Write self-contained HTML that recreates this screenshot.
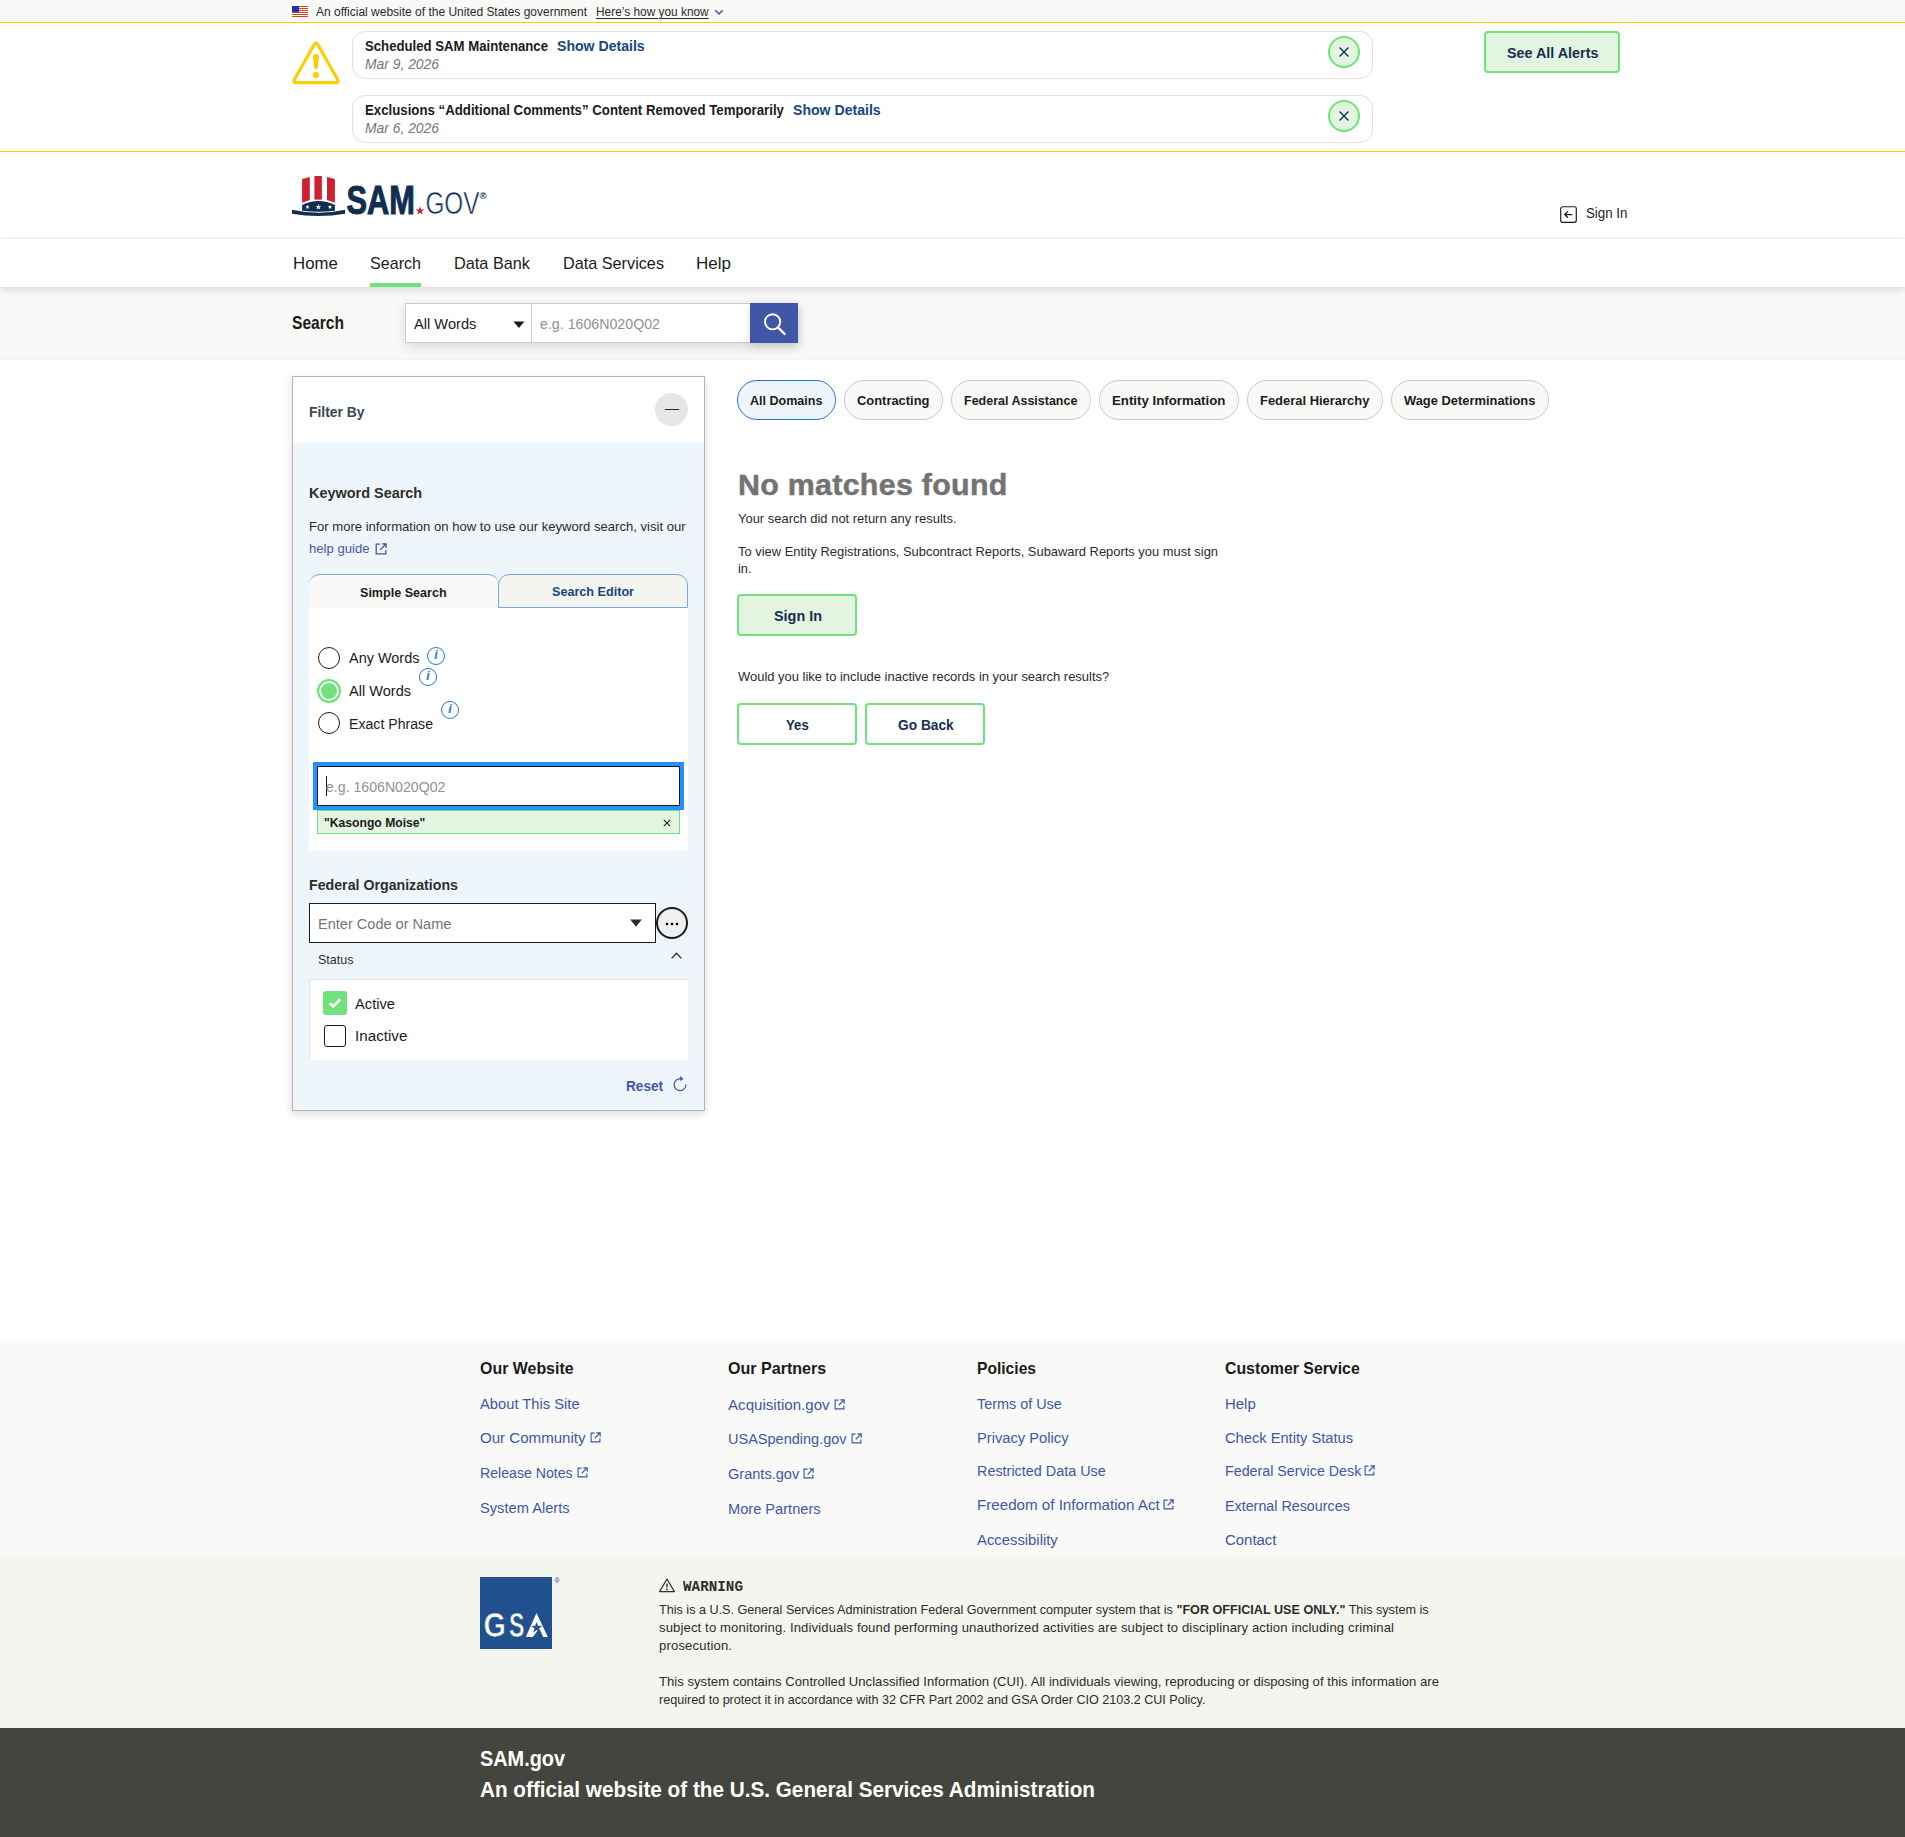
<!DOCTYPE html>
<html lang="en">
<head>
<meta charset="utf-8">
<title>SAM.gov | Search</title>
<style>*{box-sizing:border-box;margin:0;padding:0}
html,body{width:1905px;height:1837px;background:#fff;overflow:hidden}
body{font-family:"Liberation Sans",sans-serif;color:#1b1b1b;position:relative;-webkit-font-smoothing:antialiased}
a{color:inherit;text-decoration:none}
ul{list-style:none}
.abs,.t,svg.i{position:absolute}
.t{white-space:nowrap;line-height:1;display:block;transform-origin:0 50%}
.b{font-weight:700}
.it{font-style:italic}
.gray{color:#71767a}
.link{color:#3f57a6}
.navy{color:#1a4480}
.ink{color:#162e51}
.body{color:#2b2b2b}
.ph{color:#8d9297}
.mono{font-family:"Liberation Mono",monospace}
.u{text-decoration:underline;text-underline-offset:2px}
/* regions */
#govbanner{left:0;top:0;width:1905px;height:21px;background:#f9f9f7}
#alerts{left:0;top:22px;width:1905px;height:130px;background:#fff;border-top:1px solid #face00;border-bottom:1px solid #face00}
.alertbox{left:352px;width:1021px;height:48px;border:1px solid #dfe1e2;border-radius:13px;background:#fff}
.closebtn{width:32px;height:32px;border-radius:50%;border:2px solid #70e17b;background:#e3f5e1}
.btn{border:2px solid #70e17b;border-radius:4px;background:#fff}
.btn.fill{background:#e3f5e1}
#header{left:0;top:152px;width:1905px;height:87px;background:#fff;border-bottom:1px solid #f3f3ef}
#nav{left:0;top:239px;width:1905px;height:48px;background:#fff;box-shadow:0 3px 8px rgba(0,0,0,.13);z-index:3}
#navcur{left:370px;top:44px;width:51px;height:4px;background:#70e17b}
#searchband{left:0;top:287px;width:1905px;height:73px;background:#f9f9f7;border-bottom:1px solid #f3f3ef}
#sgroup{left:405px;top:303px;width:393px;height:40px;box-shadow:0 4px 11px rgba(0,0,0,.13);background:#fff}
#ssel{left:0;top:0;width:127px;height:40px;border:1px solid #c9cccf;background:#fff}
#sinp{left:126px;top:0;width:220px;height:40px;border:1px solid #c9cccf;background:#fff}
#sbtn{left:345px;top:0;width:48px;height:40px;background:#3f57a6;box-shadow:0 3px 9px rgba(0,0,0,.13)}
#panel{left:292px;top:376px;width:413px;height:735px;border:1px solid #b4b5b7;background:#eff6fb;box-shadow:0 3px 9px rgba(0,0,0,.14)}
#phead{left:0;top:0;width:411px;height:65px;background:#fff}
#pcirc{left:655px;top:393px;width:33px;height:33px;border-radius:50%;background:#e6e6e6}
#tab1{left:309px;top:574px;width:190px;height:34px;background:#f9f9f7;border-top:1px solid #7aa9ef;border-radius:11px 11px 0 0}
#tab2{left:498px;top:574px;width:190px;height:34px;background:#f5f5f0;border:1px solid #79a6ee;border-radius:11px 11px 0 0}
#kwbox{left:309px;top:608px;width:379px;height:242px;background:#fff}
.radio{width:22px;height:22px;border-radius:50%;border:1.5px solid #1b1b1b;background:#fff}
.radio.on{width:24px;height:24px;border:2px solid #70e17b;background:#70e17b;box-shadow:inset 0 0 0 2px #fff}
.info{width:18px;height:18px;border-radius:50%;border:1.5px solid #2672de;color:#2672de;font:italic 700 12.5px/15px "Liberation Sans",sans-serif;text-align:center}
#kwinput{left:317px;top:766px;width:363px;height:40px;border:1px solid #1b1b1b;background:#fff;outline:4px solid #2491ff}
#kwcaret{left:326px;top:776px;width:1px;height:20px;background:#1b1b1b}
#kwtag{left:317px;top:810px;width:363px;height:24px;border:1px solid #70e17b;background:#e3f5e1}
#foinput{left:309px;top:903px;width:347px;height:40px;border:1px solid #1b1b1b;background:#fff}
#fomore{left:656px;top:907px;width:32px;height:32px;border-radius:50%;border:2px solid #1b1b1b;background:#f0f0f0}
#stbox{left:309px;top:979px;width:379px;height:81px;background:#fff;border-top:1px solid #dfe1e2;border-left:1px solid #e6e6e6}
#cb1{left:323px;top:991px;width:24px;height:24px;border-radius:3px;background:#70e17b}
#cb2{left:324px;top:1025px;width:22px;height:22px;border-radius:3px;border:1.5px solid #1b1b1b;background:#fff}
.pill{top:380px;height:40px;border:1px solid #c6cace;border-radius:20px;background:#f9f9f7}
.pill.on{border-color:#2672de;background:#eff6fb}
#foot1{left:0;top:1343px;width:1905px;height:214px;background:#f9f9f7}
#foot2{left:0;top:1557px;width:1905px;height:171px;background:#f5f5f0}
#foot3{left:0;top:1728px;width:1905px;height:109px;background:#454540}
#gsa{left:480px;top:1577px;width:72px;height:72px;background:#21508f}
</style>
</head>
<body>

<div id="govbanner" class="abs"></div>
<svg class="i" style="left:292px;top:6px" width="16" height="11" viewBox="0 0 16 11">
<rect width="16" height="11" fill="#fff"/>
<g fill="#db3e1f"><rect y="0" width="16" height="1"/><rect y="2" width="16" height="1"/><rect y="4" width="16" height="1"/><rect y="6" width="16" height="1"/><rect y="8" width="16" height="1"/><rect y="10" width="16" height="1"/></g>
<rect width="7" height="6" fill="#1e33b1"/></svg>
<span id="t1" class="t body" style="left:316.0px;top:6.0px;font-size:12.3px;transform:scaleX(0.9749);">An official website of the United States government</span>
<a id="t2" class="t body u" style="left:596.0px;top:6.0px;font-size:12.3px;transform:scaleX(0.9661);">Here’s how you know</a>
<svg class="i" style="left:714px;top:8px" width="10" height="8" viewBox="0 0 10 8"><path d="M1.2 2.2 5 6 8.8 2.2" fill="none" stroke="#3f57a6" stroke-width="1.5"/></svg>
<div id="alerts" class="abs"></div>
<svg class="i" style="left:291px;top:41px" width="50" height="44" viewBox="0 0 50 44">
<path d="M23.03 3.69Q25 .2 26.97 3.69L46.43 38.21Q48.4 41.7 44.4 41.7H5.6Q1.6 41.7 3.57 38.21Z" fill="none" stroke="#face00" stroke-width="3.2"/>
<path d="M22 15.6Q22 12.9 25 12.9 28 12.9 28 15.6L26.8 26.6Q26.6 28.2 25 28.2 23.4 28.2 23.2 26.6Z" fill="#face00"/>
<circle cx="25" cy="34.1" r="3.1" fill="#face00"/></svg>
<div class="abs alertbox" style="top:31px"></div>
<span id="t3" class="t b" style="left:365.0px;top:39.0px;font-size:14.2px;transform:scaleX(0.9285);">Scheduled SAM Maintenance</span>
<a id="t4" class="t b navy" style="left:556.6px;top:39.0px;font-size:14.2px;transform:scaleX(0.9931);">Show Details</a>
<span id="t5" class="t it gray" style="left:365.0px;top:56.3px;font-size:15px;transform:scaleX(0.9245);">Mar 9, 2026</span>
<div class="abs closebtn" style="left:1328px;top:36px"></div>
<svg class="i" style="left:1338px;top:46px" width="12" height="12" viewBox="0 0 12 12"><path d="M1.5 1.5 10.5 10.5M10.5 1.5 1.5 10.5" stroke="#162e51" stroke-width="1.4"/></svg>
<div class="abs alertbox" style="top:95px"></div>
<span id="t6" class="t b" style="left:365.0px;top:103.0px;font-size:14.2px;transform:scaleX(0.9330);">Exclusions “Additional Comments” Content Removed Temporarily</span>
<a id="t7" class="t b navy" style="left:792.8px;top:103.0px;font-size:14.2px;transform:scaleX(0.9931);">Show Details</a>
<span id="t8" class="t it gray" style="left:365.0px;top:120.3px;font-size:15px;transform:scaleX(0.9245);">Mar 6, 2026</span>
<div class="abs closebtn" style="left:1328px;top:100px"></div>
<svg class="i" style="left:1338px;top:110px" width="12" height="12" viewBox="0 0 12 12"><path d="M1.5 1.5 10.5 10.5M10.5 1.5 1.5 10.5" stroke="#162e51" stroke-width="1.4"/></svg>
<a class="abs btn fill" style="left:1484px;top:31px;width:136px;height:42px"></a>
<span id="t9" class="t b ink" style="left:1506.6px;top:45.1px;font-size:15.2px;transform:scaleX(0.9442);">See All Alerts</span>
<div id="header" class="abs"></div>
<svg class="i" style="left:290px;top:174px" width="200" height="44" viewBox="0 0 200 44">
<g fill="#cf2030">
<path d="M12.1 5.1 19.8 2.9V25.9L12.1 28.75Z"/><path d="M24.4 2H31.9V25.6H24.4Z"/><path d="M37 2.9 44.9 5.1V28.75L37 25.9Z"/></g>
<path d="M12.1 30.9Q28.5 23.3 44.9 30.9V36.8Q28.5 38.5 12.1 36.8Z" fill="#112e51"/>
<path d="M1.9 35.8Q28.5 41.8 55.1 35.8V39.8Q28.5 44.2 1.9 39.8Z" fill="#112e51"/>
<g fill="#fff"><path d="M17.50 30.80 18.04 32.36 19.69 32.39 18.37 33.38 18.85 34.96 17.50 34.02 16.15 34.96 16.63 33.38 15.31 32.39 16.96 32.36Z"/><path d="M28.40 30.00 29.11 32.03 31.25 32.07 29.54 33.37 30.16 35.43 28.40 34.20 26.64 35.43 27.26 33.37 25.55 32.07 27.69 32.03Z"/><path d="M40.00 30.80 40.54 32.36 42.19 32.39 40.87 33.38 41.35 34.96 40.00 34.02 38.65 34.96 39.13 33.38 37.81 32.39 39.46 32.36Z"/></g>
<text x="0" y="0" transform="translate(56.6 39.6) scale(.765 1)" font-family="Liberation Sans,sans-serif" font-weight="700" font-size="40.2" fill="#112e51" stroke="#112e51" stroke-width="1.1">SAM</text>
<path d="M130.00 32.40 131.08 35.51 134.37 35.58 131.75 37.57 132.70 40.72 130.00 38.84 127.30 40.72 128.25 37.57 125.63 35.58 128.92 35.51Z" fill="#cf2030"/>
<text x="0" y="0" transform="translate(135.4 39.6) scale(.775 1)" font-family="Liberation Sans,sans-serif" font-size="31.4" fill="#112e51" stroke="#fff" stroke-width=".55">GOV</text>
<text x="189.6" y="25" font-family="Liberation Sans,sans-serif" font-weight="700" font-size="9.5" fill="#112e51">®</text>
</svg>
<svg class="i" style="left:1559px;top:205px" width="19" height="19" viewBox="0 0 19 19">
<rect x="1.7" y="1.7" width="15.6" height="15.6" rx="2" fill="none" stroke="#1b1b1b" stroke-width="1.15"/>
<path d="M13.2 9.6H6M9 6.4 5.8 9.6 9 12.8" fill="none" stroke="#1b1b1b" stroke-width="1.3"/></svg>
<a id="t10" class="t" style="left:1586.0px;top:204.9px;font-size:15px;transform:scaleX(0.8843);">Sign In</a>
<nav id="nav" class="abs"><div id="navcur" class="abs"></div></nav>
<a id="t11" class="t" style="left:292.6px;top:254.6px;font-size:17px;transform:scaleX(0.9877);z-index:4;">Home</a>
<a id="t12" class="t" style="left:370.0px;top:254.6px;font-size:17px;transform:scaleX(0.9466);z-index:4;">Search</a>
<a id="t13" class="t" style="left:454.0px;top:254.6px;font-size:17px;transform:scaleX(0.9573);z-index:4;">Data Bank</a>
<a id="t14" class="t" style="left:563.0px;top:254.6px;font-size:17px;transform:scaleX(0.9544);z-index:4;">Data Services</a>
<a id="t15" class="t" style="left:696.0px;top:254.6px;font-size:17px;letter-spacing:0.010px;z-index:4;">Help</a>
<div id="searchband" class="abs"></div>
<span id="t16" class="t b" style="left:292.0px;top:313.2px;font-size:19px;transform:scaleX(0.8205);">Search</span>
<div id="sgroup" class="abs"><div id="ssel" class="abs"></div><div id="sinp" class="abs"></div><div id="sbtn" class="abs">
<svg class="i" style="left:12px;top:8px" width="26" height="26" viewBox="0 0 26 26"><circle cx="10.6" cy="10.8" r="7.6" fill="none" stroke="#fff" stroke-width="1.9"/><path d="M16.2 16.6 22.6 23" stroke="#fff" stroke-width="2.3" stroke-linecap="round"/></svg></div></div>
<span id="t17" class="t" style="left:414.3px;top:316.4px;font-size:15.2px;transform:scaleX(0.9644);">All Words</span>
<svg class="i" style="left:513px;top:321px" width="12" height="8" viewBox="0 0 12 8"><path d="M0.4 0.6H11.4L5.9 7Z" fill="#1b1b1b"/></svg>
<span id="t18" class="t ph" style="left:540.0px;top:316.4px;font-size:15.2px;transform:scaleX(0.9349);">e.g. 1606N020Q02</span>
<aside id="panel" class="abs"><div id="phead" class="abs"></div></aside>
<span id="t19" class="t b" style="left:309.4px;top:403.5px;font-size:15.2px;transform:scaleX(0.9150);color:#3d4551;">Filter By</span>
<div id="pcirc" class="abs"></div>
<div class="abs" style="left:665px;top:408.5px;width:14px;height:1.5px;background:#162e51"></div>
<span id="t20" class="t b" style="left:309.4px;top:485.1px;font-size:15.2px;transform:scaleX(0.9510);color:#2e2e2a;">Keyword Search</span>
<span id="t21" class="t body" style="left:309.4px;top:519.7px;font-size:13.3px;transform:scaleX(0.9837);">For more information on how to use our keyword search, visit our</span>
<a id="t22" class="t link" style="left:309.4px;top:541.7px;font-size:13.3px;transform:scaleX(0.9874);">help guide</a>
<svg class="i" style="left:375px;top:542.6px" width="12" height="12" viewBox="0 0 12 12"><path d="M5 1.2H1.2V10.8H10.8V7" fill="none" stroke="#3f57a6" stroke-width="1.25"/><path d="M6.9 0.9H11.1V5.1M11 1 5.2 6.8" fill="none" stroke="#3f57a6" stroke-width="1.25"/></svg>
<div id="tab1" class="abs"></div><div id="tab2" class="abs"></div>
<span id="t23" class="t b" style="left:360.0px;top:585.7px;font-size:13.3px;transform:scaleX(0.9448);">Simple Search</span>
<span id="t24" class="t b navy" style="left:552.0px;top:584.7px;font-size:13.3px;transform:scaleX(0.9483);">Search Editor</span>
<div id="kwbox" class="abs"></div>
<div class="abs radio" style="left:318px;top:647px"></div>
<span id="t25" class="t" style="left:349.0px;top:649.7px;font-size:15.2px;transform:scaleX(0.9514);">Any Words</span>
<div class="abs info" style="left:427px;top:647px">i</div>
<div class="abs radio on" style="left:317px;top:679px"></div>
<span id="t26" class="t" style="left:349.0px;top:683.1px;font-size:15.2px;transform:scaleX(0.9582);">All Words</span>
<div class="abs info" style="left:419px;top:668px">i</div>
<div class="abs radio" style="left:318px;top:712px"></div>
<span id="t27" class="t" style="left:349.0px;top:716.1px;font-size:15.2px;transform:scaleX(0.9299);">Exact Phrase</span>
<div class="abs info" style="left:441px;top:701px">i</div>
<div id="kwinput" class="abs"></div><div id="kwcaret" class="abs"></div>
<span id="t28" class="t ph" style="left:326.0px;top:779.1px;font-size:15.2px;transform:scaleX(0.9302);">e.g. 1606N020Q02</span>
<div id="kwtag" class="abs"></div>
<span id="t29" class="t b" style="left:323.6px;top:815.7px;font-size:13.3px;transform:scaleX(0.9145);">"Kasongo Moise"</span>
<svg class="i" style="left:662px;top:818px" width="10" height="10" viewBox="0 0 10 10"><path d="M1.8 1.8 8.2 8.2M8.2 1.8 1.8 8.2" stroke="#1b1b1b" stroke-width="1.1"/></svg>
<span id="t30" class="t b" style="left:309.3px;top:876.8px;font-size:15.2px;transform:scaleX(0.9341);color:#2e2e2a;">Federal Organizations</span>
<div id="foinput" class="abs"></div>
<span id="t31" class="t gray" style="left:318.3px;top:916.1px;font-size:15.2px;transform:scaleX(0.9577);">Enter Code or Name</span>
<svg class="i" style="left:630px;top:919px" width="12" height="8" viewBox="0 0 12 8"><path d="M0.2 0.4H11.8L6 7.8Z" fill="#2e2e2a"/></svg>
<div id="fomore" class="abs"></div>
<svg class="i" style="left:665px;top:921px" width="14" height="6" viewBox="0 0 14 6"><circle cx="2" cy="3" r="1.3"/><circle cx="7" cy="3" r="1.3"/><circle cx="12" cy="3" r="1.3"/></svg>
<span id="t32" class="t" style="left:317.6px;top:952.7px;font-size:13.3px;transform:scaleX(0.9389);color:#2e2e2a;">Status</span>
<svg class="i" style="left:670px;top:951px" width="13" height="9" viewBox="0 0 13 9"><path d="M1.6 7.4 6.5 2.2 11.4 7.4" fill="none" stroke="#2e2e2a" stroke-width="1.3"/></svg>
<div id="stbox" class="abs"></div>
<div id="cb1" class="abs"><svg class="i" style="left:5px;top:6px" width="14" height="12" viewBox="0 0 14 12"><path d="M1.8 6.2 5.2 9.4 12.2 2.4" fill="none" stroke="#fff" stroke-width="2.6"/></svg></div>
<span id="t33" class="t" style="left:355.0px;top:995.7px;font-size:15.2px;transform:scaleX(0.9671);">Active</span>
<div id="cb2" class="abs"></div>
<span id="t34" class="t" style="left:355.0px;top:1028.0px;font-size:15.2px;letter-spacing:0.008px;">Inactive</span>
<a id="t35" class="t b link" style="left:625.5px;top:1078.1px;font-size:15.2px;transform:scaleX(0.8967);">Reset</a>
<svg class="i" style="left:672px;top:1075px" width="16" height="17" viewBox="0 0 16 17">
<path d="M8.9 3.9A5.9 5.9 0 1 0 13.9 9.6" fill="none" stroke="#3f57a6" stroke-width="1.2"/>
<path d="M8.2 1 11.4 3.8 8.2 6.2Z" fill="#3f57a6"/></svg>
<div class="abs pill on" style="left:737px;width:99px"></div>
<span id="t36" class="t b" style="left:750.2px;top:393.7px;font-size:13.4px;transform:scaleX(0.9355);">All Domains</span>
<div class="abs pill" style="left:844px;width:99px"></div>
<span id="t37" class="t b" style="left:857.2px;top:393.7px;font-size:13.4px;transform:scaleX(0.9635);">Contracting</span>
<div class="abs pill" style="left:951px;width:140px"></div>
<span id="t38" class="t b" style="left:964.2px;top:393.7px;font-size:13.4px;transform:scaleX(0.9327);">Federal Assistance</span>
<div class="abs pill" style="left:1099px;width:140px"></div>
<span id="t39" class="t b" style="left:1112.2px;top:393.7px;font-size:13.4px;transform:scaleX(0.9899);">Entity Information</span>
<div class="abs pill" style="left:1247px;width:136px"></div>
<span id="t40" class="t b" style="left:1260.2px;top:393.7px;font-size:13.4px;transform:scaleX(0.9669);">Federal Hierarchy</span>
<div class="abs pill" style="left:1391px;width:158px"></div>
<span id="t41" class="t b" style="left:1404.2px;top:393.7px;font-size:13.4px;transform:scaleX(0.9632);">Wage Determinations</span>
<h1 id="t42" class="t b" style="left:738.0px;top:469.1px;font-size:30.4px;letter-spacing:0.280px;color:#737373;-webkit-text-stroke:.5px #737373;">No matches found</h1>
<p id="t43" class="t body" style="left:737.5px;top:512.2px;font-size:13.1px;transform:scaleX(0.9897);">Your search did not return any results.</p>
<p id="t44" class="t body" style="left:737.5px;top:544.9px;font-size:13.1px;transform:scaleX(0.9859);">To view Entity Registrations, Subcontract Reports, Subaward Reports you must sign</p>
<p id="t45" class="t body" style="left:737.5px;top:562.3px;font-size:13.1px;transform:scaleX(0.9752);">in.</p>
<a class="abs btn fill" style="left:737px;top:594px;width:120px;height:42px"></a>
<span id="t46" class="t b ink" style="left:773.5px;top:607.8px;font-size:15.2px;transform:scaleX(0.9481);">Sign In</span>
<p id="t47" class="t body" style="left:737.5px;top:670.4px;font-size:13.1px;transform:scaleX(0.9891);">Would you like to include inactive records in your search results?</p>
<a class="abs btn" style="left:737px;top:703px;width:120px;height:42px"></a>
<span id="t48" class="t b ink" style="left:786.0px;top:717.1px;font-size:15.2px;transform:scaleX(0.8668);">Yes</span>
<a class="abs btn" style="left:865px;top:703px;width:120px;height:42px"></a>
<span id="t49" class="t b ink" style="left:897.5px;top:717.1px;font-size:15.2px;transform:scaleX(0.9039);">Go Back</span>
<footer><div id="foot1" class="abs"></div><div id="foot2" class="abs"></div><div id="foot3" class="abs"></div></footer>
<h3 id="t50" class="t b" style="left:480.4px;top:1360.1px;font-size:17px;transform:scaleX(0.9376);">Our Website</h3>
<a id="t51" class="t link" style="left:480.4px;top:1396.1px;font-size:15.2px;transform:scaleX(0.9696);">About This Site</a>
<a id="t52" class="t link" style="left:480.4px;top:1430.1px;font-size:15.2px;transform:scaleX(0.9930);">Our Community</a>
<svg class="i" style="left:589.6px;top:1432.4px" width="11" height="11" viewBox="0 0 12 12"><path d="M5 1.2H1.2V10.8H10.8V7" fill="none" stroke="#3f57a6" stroke-width="1.25"/><path d="M6.9 0.9H11.1V5.1M11 1 5.2 6.8" fill="none" stroke="#3f57a6" stroke-width="1.25"/></svg>
<a id="t53" class="t link" style="left:480.4px;top:1465.1px;font-size:15.2px;transform:scaleX(0.9295);">Release Notes</a>
<svg class="i" style="left:576.6px;top:1467.4px" width="11" height="11" viewBox="0 0 12 12"><path d="M5 1.2H1.2V10.8H10.8V7" fill="none" stroke="#3f57a6" stroke-width="1.25"/><path d="M6.9 0.9H11.1V5.1M11 1 5.2 6.8" fill="none" stroke="#3f57a6" stroke-width="1.25"/></svg>
<a id="t54" class="t link" style="left:480.4px;top:1499.7px;font-size:15.2px;transform:scaleX(0.9651);">System Alerts</a>
<h3 id="t55" class="t b" style="left:728.4px;top:1360.1px;font-size:17px;transform:scaleX(0.9448);">Our Partners</h3>
<a id="t56" class="t link" style="left:728.4px;top:1396.5px;font-size:15.2px;transform:scaleX(0.9946);">Acquisition.gov</a>
<svg class="i" style="left:833.6px;top:1398.8000000000002px" width="11" height="11" viewBox="0 0 12 12"><path d="M5 1.2H1.2V10.8H10.8V7" fill="none" stroke="#3f57a6" stroke-width="1.25"/><path d="M6.9 0.9H11.1V5.1M11 1 5.2 6.8" fill="none" stroke="#3f57a6" stroke-width="1.25"/></svg>
<a id="t57" class="t link" style="left:728.4px;top:1431.1px;font-size:15.2px;transform:scaleX(0.9555);">USASpending.gov</a>
<svg class="i" style="left:850.6px;top:1433.4px" width="11" height="11" viewBox="0 0 12 12"><path d="M5 1.2H1.2V10.8H10.8V7" fill="none" stroke="#3f57a6" stroke-width="1.25"/><path d="M6.9 0.9H11.1V5.1M11 1 5.2 6.8" fill="none" stroke="#3f57a6" stroke-width="1.25"/></svg>
<a id="t58" class="t link" style="left:728.4px;top:1466.1px;font-size:15.2px;transform:scaleX(0.9583);">Grants.gov</a>
<svg class="i" style="left:803.2px;top:1468.4px" width="11" height="11" viewBox="0 0 12 12"><path d="M5 1.2H1.2V10.8H10.8V7" fill="none" stroke="#3f57a6" stroke-width="1.25"/><path d="M6.9 0.9H11.1V5.1M11 1 5.2 6.8" fill="none" stroke="#3f57a6" stroke-width="1.25"/></svg>
<a id="t59" class="t link" style="left:728.4px;top:1500.7px;font-size:15.2px;transform:scaleX(0.9622);">More Partners</a>
<h3 id="t60" class="t b" style="left:976.5px;top:1360.1px;font-size:17px;transform:scaleX(0.9181);">Policies</h3>
<a id="t61" class="t link" style="left:976.5px;top:1395.9px;font-size:15.2px;transform:scaleX(0.9478);">Terms of Use</a>
<a id="t62" class="t link" style="left:976.5px;top:1429.8px;font-size:15.2px;transform:scaleX(0.9679);">Privacy Policy</a>
<a id="t63" class="t link" style="left:976.5px;top:1463.1px;font-size:15.2px;transform:scaleX(0.9477);">Restricted Data Use</a>
<a id="t64" class="t link" style="left:976.5px;top:1497.0px;font-size:15.2px;transform:scaleX(0.9973);">Freedom of Information Act</a>
<svg class="i" style="left:1162.8px;top:1499.3000000000002px" width="11" height="11" viewBox="0 0 12 12"><path d="M5 1.2H1.2V10.8H10.8V7" fill="none" stroke="#3f57a6" stroke-width="1.25"/><path d="M6.9 0.9H11.1V5.1M11 1 5.2 6.8" fill="none" stroke="#3f57a6" stroke-width="1.25"/></svg>
<a id="t65" class="t link" style="left:976.5px;top:1531.6px;font-size:15.2px;transform:scaleX(0.9768);">Accessibility</a>
<h3 id="t66" class="t b" style="left:1224.5px;top:1360.1px;font-size:17px;transform:scaleX(0.9317);">Customer Service</h3>
<a id="t67" class="t link" style="left:1224.5px;top:1395.9px;font-size:15.2px;transform:scaleX(0.9824);">Help</a>
<a id="t68" class="t link" style="left:1224.5px;top:1429.8px;font-size:15.2px;transform:scaleX(0.9658);">Check Entity Status</a>
<a id="t69" class="t link" style="left:1224.5px;top:1463.1px;font-size:15.2px;transform:scaleX(0.9388);">Federal Service Desk</a>
<svg class="i" style="left:1364.4px;top:1465.4px" width="11" height="11" viewBox="0 0 12 12"><path d="M5 1.2H1.2V10.8H10.8V7" fill="none" stroke="#3f57a6" stroke-width="1.25"/><path d="M6.9 0.9H11.1V5.1M11 1 5.2 6.8" fill="none" stroke="#3f57a6" stroke-width="1.25"/></svg>
<a id="t70" class="t link" style="left:1224.5px;top:1497.8px;font-size:15.2px;transform:scaleX(0.9417);">External Resources</a>
<a id="t71" class="t link" style="left:1224.5px;top:1531.6px;font-size:15.2px;transform:scaleX(0.9839);">Contact</a>
<div id="gsa" class="abs"></div>
<svg class="i" style="left:480px;top:1577px" width="84" height="72" viewBox="0 0 84 72">
<g font-family="Liberation Sans,sans-serif" font-weight="700" font-size="34.6" fill="#fff">
<text transform="translate(3.6 59.8) scale(.83 1)" stroke="#21508f" stroke-width=".7">G</text>
<text transform="translate(29.0 59.8) scale(.67 1)" stroke="#21508f" stroke-width=".7">S</text></g>
<path d="M56.5 35.9 67.8 60H45.8Z" fill="#fff"/>
<path d="M56.7 44.9 58.1 48.8 62.2 48.9 58.9 51.4 60.1 55.4 56.7 53 53.3 55.4 54.5 51.4 51.2 48.9 55.3 48.8Z" fill="#21508f"/>
<path d="M52.6 60.3 63.4 60.3 59.6 52.2 57 54.6Z" fill="#21508f"/>
<text x="74.6" y="6.4" font-family="Liberation Sans,sans-serif" font-size="7" fill="#21508f">®</text>
</svg>
<svg class="i" style="left:658px;top:1577px" width="18" height="16" viewBox="0 0 18 16">
<path d="M9 2 1.6 14.6H16.4Z" fill="none" stroke="#2e2e2a" stroke-width="1.2" stroke-linejoin="round"/>
<path d="M9 6.4V10.6" stroke="#2e2e2a" stroke-width="1.4"/><circle cx="9" cy="12.4" r=".9" fill="#2e2e2a"/></svg>
<span id="t72" class="t b mono" style="left:683.0px;top:1579.6px;font-size:14.3px;transform:scaleX(0.9990);color:#2e2e2a;">WARNING</span>
<p id="t73" class="t body" style="left:659.0px;top:1602.7px;font-size:13.1px;transform:scaleX(0.9634);">This is a U.S. General Services Administration Federal Government computer system that is <b>"FOR OFFICIAL USE ONLY."</b> This system is</p>
<p id="t74" class="t body" style="left:659.0px;top:1620.9px;font-size:13.1px;letter-spacing:0.124px;">subject to monitoring. Individuals found performing unauthorized activities are subject to disciplinary action including criminal</p>
<p id="t75" class="t body" style="left:659.0px;top:1639.2px;font-size:13.1px;letter-spacing:0.151px;">prosecution.</p>
<p id="t76" class="t body" style="left:659.0px;top:1674.7px;font-size:13.1px;letter-spacing:0.020px;">This system contains Controlled Unclassified Information (CUI). All individuals viewing, reproducing or disposing of this information are</p>
<p id="t77" class="t body" style="left:659.0px;top:1692.7px;font-size:13.1px;transform:scaleX(0.9606);">required to protect it in accordance with 32 CFR Part 2002 and GSA Order CIO 2103.2 CUI Policy.</p>
<span id="t78" class="t b" style="left:480.0px;top:1747.9px;font-size:22.6px;transform:scaleX(0.8794);color:#fff;">SAM.gov</span>
<span id="t79" class="t b" style="left:480.0px;top:1778.6px;font-size:22.6px;transform:scaleX(0.9167);color:#fff;">An official website of the U.S. General Services Administration</span>
</body></html>
